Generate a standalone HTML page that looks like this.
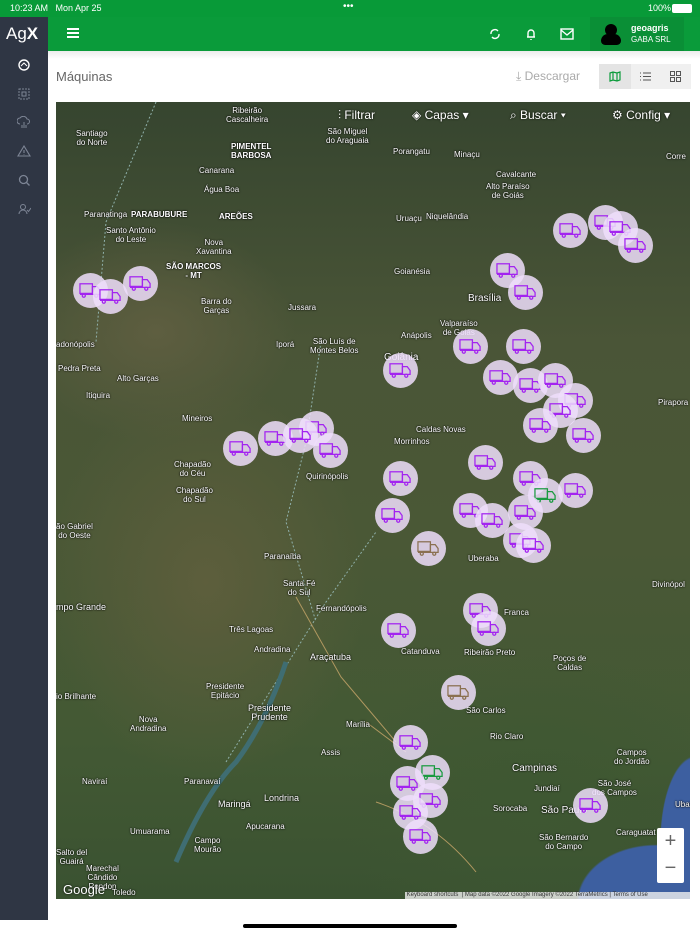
<!DOCTYPE html>
<html><head><meta charset="utf-8">
<style>
*{margin:0;padding:0;box-sizing:border-box}
body{width:700px;height:934px;overflow:hidden;background:#fff;font-family:"Liberation Sans",sans-serif;position:relative}
.sb{position:absolute;left:0;top:0;width:700px;height:17px;background:#089a38;color:#fff;font-size:9px}
.hd{position:absolute;left:48px;top:17px;width:652px;height:34px;background:#0a9b3a}
.side{position:absolute;left:0;top:17px;width:48px;height:903px;background:#2f3644}
.map{position:absolute;left:56px;top:102px;width:634px;height:797px;overflow:hidden;
background:
radial-gradient(ellipse 110px 80px at 600px 800px,#3d5fa0 70%,transparent 72%),
radial-gradient(ellipse 50px 120px at 640px 740px,#3d5fa0 70%,transparent 72%),
radial-gradient(ellipse 140px 110px at 100px 230px,#5e5e40 0%,transparent 100%),
radial-gradient(ellipse 160px 200px at 150px 480px,#5d5e3c 0%,transparent 100%),
radial-gradient(ellipse 200px 150px at 480px 700px,#3e5732 0%,transparent 100%),
linear-gradient(180deg,#36452f 0%,#4a5537 30%,#4a5836 55%,#435934 80%,#3a5231 100%)}
.l{position:absolute;color:#fff;font-size:8px;text-shadow:0 0 2px #000,0 0 1px #000;line-height:9px;text-align:center;white-space:nowrap}
.m{position:absolute;width:35px;height:35px;border-radius:50%;background:rgba(238,222,252,.85)}
.m svg{position:absolute;left:6px;top:9px}
.tb{position:absolute;top:6px;color:#fff;font-size:12px;text-shadow:0 0 2px #000}
</style></head><body>
<svg width="0" height="0" style="position:absolute"><defs>
<symbol id="t" viewBox="0 0 24 16"><g fill="none" stroke-width="1.3"><rect x="1" y="1" width="13" height="10"/><path d="M14 4h5l3 4v4h-8zM1 12h13"/><circle cx="5" cy="13.5" r="1.6"/><circle cx="18" cy="13.5" r="1.6"/></g></symbol>
</defs></svg>
<div class="sb"><span style="position:absolute;left:10px;top:3px">10:23 AM&nbsp;&nbsp; Mon Apr 25</span><span style="position:absolute;left:343px;top:1px;font-size:10px">•••</span><span style="position:absolute;left:648px;top:3px">100%</span><span style="position:absolute;left:672px;top:4px;width:20px;height:9px;background:#fff;border-radius:2px"></span></div>
<div class="side">
<div style="position:absolute;left:6px;top:7px;color:#fff;font-size:17px">Ag<b>X</b></div>
<svg style="position:absolute;left:18px;top:42px" width="12" height="12" viewBox="0 0 12 12"><circle cx="6" cy="6" r="5" fill="none" stroke="#fff" stroke-width="1.4"/><path d="M3 7l3-3 3 3" stroke="#fff" fill="none"/></svg>
<svg style="position:absolute;left:18px;top:71px" width="12" height="12"><rect x="1" y="1" width="10" height="10" fill="none" stroke="#7d8595" stroke-dasharray="2 1"/><rect x="4" y="4" width="4" height="4" fill="none" stroke="#7d8595"/></svg>
<svg style="position:absolute;left:17px;top:99px" width="14" height="12"><path d="M3 8a3 3 0 010-6 4 4 0 017 1 2.5 2.5 0 010 5M7 6v6M5 9v3M9 9v3" fill="none" stroke="#7d8595"/></svg>
<svg style="position:absolute;left:17px;top:128px" width="14" height="12"><path d="M7 1L13 11H1z M7 5v3M7 9.5v.5" fill="none" stroke="#7d8595" stroke-width="1.1"/></svg>
<svg style="position:absolute;left:18px;top:157px" width="13" height="13"><circle cx="5.5" cy="5.5" r="4" fill="none" stroke="#7d8595" stroke-width="1.3"/><path d="M8.5 8.5l3 3" stroke="#7d8595" stroke-width="1.3"/></svg>
<svg style="position:absolute;left:18px;top:186px" width="13" height="12"><circle cx="5" cy="4" r="2.5" fill="none" stroke="#7d8595"/><path d="M1 11a4 4 0 018 0M9 7l1.5 1.5L13 5" fill="none" stroke="#7d8595"/></svg>
</div>
<div class="hd">
<div style="position:absolute;left:19px;top:11px;width:12px;height:2px;background:#fff;box-shadow:0 4px #fff,0 8px #fff"></div>
<svg style="position:absolute;left:441px;top:10px" width="12" height="14"><path d="M2 7a4 4 0 017-3M10 7a4 4 0 01-7 3" fill="none" stroke="#fff" stroke-width="1.4"/></svg>
<svg style="position:absolute;left:477px;top:10px" width="12" height="14"><path d="M2 10h8M3 10V6a3 3 0 016 0v4M6 12v1" fill="none" stroke="#fff" stroke-width="1.4"/></svg>
<svg style="position:absolute;left:512px;top:11px" width="14" height="12"><rect x="1" y="1" width="12" height="10" fill="none" stroke="#fff" stroke-width="1.4"/><path d="M1 2l6 5 6-5" fill="none" stroke="#fff" stroke-width="1.3"/></svg>
<div style="position:absolute;left:542px;top:0;width:94px;height:34px;background:#0a8f36"></div>
<div style="position:absolute;left:557px;top:7px;width:12px;height:12px;border-radius:50%;background:#000"></div>
<div style="position:absolute;left:553px;top:17px;width:20px;height:11px;border-radius:10px 10px 6px 6px;background:#000"></div>
<div style="position:absolute;left:583px;top:6px;color:#fff;font-size:9px;font-weight:bold">geoagris</div>
<div style="position:absolute;left:583px;top:18px;color:#fff;font-size:8px">GABA SRL</div>
</div>
<div style="position:absolute;left:48px;top:51px;width:652px;height:8px;background:linear-gradient(#ececec,#fff)"></div>
<div style="position:absolute;left:56px;top:69px;font-size:13px;color:#666">Máquinas</div>
<div style="position:absolute;left:516px;top:69px;font-size:12px;color:#aaa">⤓ Descargar</div>
<div style="position:absolute;left:599px;top:64px;width:92px;height:25px;background:#f0f0f0"></div>
<div style="position:absolute;left:599px;top:64px;width:32px;height:25px;background:#e4e4e4"></div>
<svg style="position:absolute;left:609px;top:71px" width="12" height="11"><path d="M1 2l3-1 4 1 3-1v8l-3 1-4-1-3 1zM4 1v8M8 2v8" fill="none" stroke="#0a9b3a" stroke-width="1.2"/></svg>
<svg style="position:absolute;left:640px;top:72px" width="11" height="9"><path d="M0 1h1M3 1h8M0 4.5h1M3 4.5h8M0 8h1M3 8h8" stroke="#555"/></svg>
<svg style="position:absolute;left:670px;top:71px" width="11" height="11"><rect x=".5" y=".5" width="4" height="4" fill="none" stroke="#555"/><rect x="6.5" y=".5" width="4" height="4" fill="none" stroke="#555"/><rect x=".5" y="6.5" width="4" height="4" fill="none" stroke="#555"/><rect x="6.5" y="6.5" width="4" height="4" fill="none" stroke="#555"/></svg>

<div class="map">
<svg width="634" height="797" style="position:absolute;left:0;top:0"><path d="M100 0 L50 120 L40 240 M265 240 L250 340 L230 420 L260 520 M170 660 Q220 580 270 500 L320 430" fill="none" stroke="#8fb0aa" stroke-width="1" stroke-dasharray="2 2"/><path d="M230 560 Q210 620 180 660 Q150 690 120 760" fill="none" stroke="#3f6d72" stroke-width="5"/><path d="M240 495 L285 575 L340 640 M320 700 Q380 720 420 770 M310 620 L350 650" fill="none" stroke="#b09860" stroke-width="1"/></svg>
<div class="l" style="left:170px;top:4px">Ribeirão<br>Cascalheira</div>
<div class="l" style="left:20px;top:27px">Santiago<br>do Norte</div>
<div class="l" style="left:175px;top:40px;font-weight:bold">PIMENTEL<br>BARBOSA</div>
<div class="l" style="left:270px;top:25px">São Miguel<br>do Araguaia</div>
<div class="l" style="left:337px;top:45px">Porangatu</div>
<div class="l" style="left:398px;top:48px">Minaçu</div>
<div class="l" style="left:440px;top:68px">Cavalcante</div>
<div class="l" style="left:430px;top:80px">Alto Paraíso<br>de Goiás</div>
<div class="l" style="left:143px;top:64px">Canarana</div>
<div class="l" style="left:148px;top:83px">Água Boa</div>
<div class="l" style="left:28px;top:108px">Paranatinga</div>
<div class="l" style="left:75px;top:108px;font-weight:bold">PARABUBURE</div>
<div class="l" style="left:163px;top:110px;font-weight:bold">AREÕES</div>
<div class="l" style="left:50px;top:124px">Santo Antônio<br>do Leste</div>
<div class="l" style="left:340px;top:112px">Uruaçu</div>
<div class="l" style="left:370px;top:110px">Niquelândia</div>
<div class="l" style="left:140px;top:136px">Nova<br>Xavantina</div>
<div class="l" style="left:110px;top:160px;font-weight:bold">SÃO MARCOS<br>- MT</div>
<div class="l" style="left:338px;top:165px">Goianésia</div>
<div class="l" style="left:412px;top:192px;font-size:10px">Brasília</div>
<div class="l" style="left:145px;top:195px">Barra do<br>Garças</div>
<div class="l" style="left:232px;top:201px">Jussara</div>
<div class="l" style="left:384px;top:217px">Valparaíso<br>de Goiás</div>
<div class="l" style="left:345px;top:229px">Anápolis</div>
<div class="l" style="left:0;top:238px">adonópolis</div>
<div class="l" style="left:220px;top:238px">Iporá</div>
<div class="l" style="left:254px;top:235px">São Luís de<br>Montes Belos</div>
<div class="l" style="left:328px;top:251px;font-size:10px">Goiânia</div>
<div class="l" style="left:2px;top:262px">Pedra Preta</div>
<div class="l" style="left:61px;top:272px">Alto Garças</div>
<div class="l" style="left:30px;top:289px">Itiquira</div>
<div class="l" style="left:126px;top:312px">Mineiros</div>
<div class="l" style="left:360px;top:323px">Caldas Novas</div>
<div class="l" style="left:338px;top:335px">Morrinhos</div>
<div class="l" style="left:118px;top:358px">Chapadão<br>do Céu</div>
<div class="l" style="left:120px;top:384px">Chapadão<br>do Sul</div>
<div class="l" style="left:250px;top:370px">Quirinópolis</div>
<div class="l" style="left:610px;top:50px">Corre</div>
<div class="l" style="left:602px;top:296px">Pirapora</div>
<div class="l" style="left:0;top:420px">ão Gabriel<br>do Oeste</div>
<div class="l" style="left:208px;top:450px">Paranaíba</div>
<div class="l" style="left:227px;top:477px">Santa Fé<br>do Sul</div>
<div class="l" style="left:412px;top:452px">Uberaba</div>
<div class="l" style="left:0;top:501px;font-size:9px">mpo Grande</div>
<div class="l" style="left:260px;top:502px">Fernandópolis</div>
<div class="l" style="left:448px;top:506px">Franca</div>
<div class="l" style="left:596px;top:478px">Divinópol</div>
<div class="l" style="left:173px;top:523px">Três Lagoas</div>
<div class="l" style="left:198px;top:543px">Andradina</div>
<div class="l" style="left:254px;top:551px;font-size:9px">Araçatuba</div>
<div class="l" style="left:345px;top:545px">Catanduva</div>
<div class="l" style="left:408px;top:546px">Ribeirão Preto</div>
<div class="l" style="left:150px;top:580px">Presidente<br>Epitácio</div>
<div class="l" style="left:497px;top:552px">Poços de<br>Caldas</div>
<div class="l" style="left:0;top:590px">io Brilhante</div>
<div class="l" style="left:192px;top:602px;font-size:9px">Presidente<br>Prudente</div>
<div class="l" style="left:410px;top:604px">São Carlos</div>
<div class="l" style="left:74px;top:613px">Nova<br>Andradina</div>
<div class="l" style="left:290px;top:618px">Marília</div>
<div class="l" style="left:434px;top:630px">Rio Claro</div>
<div class="l" style="left:265px;top:646px">Assis</div>
<div class="l" style="left:558px;top:646px">Campos<br>do Jordão</div>
<div class="l" style="left:456px;top:662px;font-size:10px">Campinas</div>
<div class="l" style="left:536px;top:677px">São José<br>dos Campos</div>
<div class="l" style="left:26px;top:675px">Naviraí</div>
<div class="l" style="left:128px;top:675px">Paranavaí</div>
<div class="l" style="left:478px;top:682px">Jundiaí</div>
<div class="l" style="left:208px;top:692px;font-size:9px">Londrina</div>
<div class="l" style="left:162px;top:698px;font-size:9px">Maringá</div>
<div class="l" style="left:437px;top:702px">Sorocaba</div>
<div class="l" style="left:485px;top:704px;font-size:10px">São Paulo</div>
<div class="l" style="left:619px;top:698px">Ubatuba</div>
<div class="l" style="left:190px;top:720px">Apucarana</div>
<div class="l" style="left:74px;top:725px">Umuarama</div>
<div class="l" style="left:560px;top:726px">Caraguatat</div>
<div class="l" style="left:483px;top:731px">São Bernardo<br>do Campo</div>
<div class="l" style="left:138px;top:734px">Campo<br>Mourão</div>
<div class="l" style="left:0;top:746px">Salto del<br>Guairá</div>
<div class="l" style="left:30px;top:762px">Marechal<br>Cândido<br>Rondon</div>
<div class="l" style="left:56px;top:786px">Toledo</div>
<div style="position:absolute;left:7px;top:780px;color:#fff;font-size:13px;text-shadow:0 0 2px #000">Google</div>
<div style="position:absolute;left:349px;top:790px;width:285px;height:7px;background:rgba(240,240,240,.8);font-size:6px;color:#333;line-height:7px;white-space:nowrap">&nbsp;Keyboard shortcuts &nbsp;| Map data ©2022 Google Imagery ©2022 TerraMetrics | Terms of Use</div>
<div style="position:absolute;left:601px;top:726px;width:27px;height:55px;background:#fff;border-radius:2px;color:#666;font-size:20px;text-align:center;line-height:27px">+<br>−</div>

<div class="tb" style="left:282px">⫶ Filtrar</div>
<div class="tb" style="left:356px">◈ Capas ▾</div>
<div class="tb" style="left:454px">⌕ Buscar ▾</div>
<div class="tb" style="left:556px">⚙ Config ▾</div>

<div id="mk"></div>
</div>
<div style="position:absolute;left:243px;top:924px;width:214px;height:4px;border-radius:2px;background:#000"></div>
<script>
var p=[[90,290],[110,296],[140,283],[570,230],[605,222],[620,228],[635,245],[507,270],[525,292],[470,346],[523,346],[400,370],[500,377],[530,385],[555,380],[575,400],[560,410],[540,425],[583,435],[240,448],[275,438],[316,428],[300,435],[330,450],[485,462],[400,478],[530,478],[545,495,'#1a9a40'],[575,490],[470,510],[492,520],[525,512],[392,515],[428,548,'#8a7050'],[520,540],[533,545],[480,610],[488,628],[398,630],[458,692,'#8a7050'],[410,742],[432,772,'#1a9a40'],[407,783],[430,800],[410,812],[420,836],[590,805]];
var h='';p.forEach(function(a){var c=a[2]||'#a324f0';h+='<div class="m" style="left:'+(a[0]-56-17)+'px;top:'+(a[1]-102-17)+'px"><svg width="23" height="17" stroke="'+c+'"><use href="#t"/></svg></div>'});
document.getElementById('mk').innerHTML=h;
</script>
</body></html>
